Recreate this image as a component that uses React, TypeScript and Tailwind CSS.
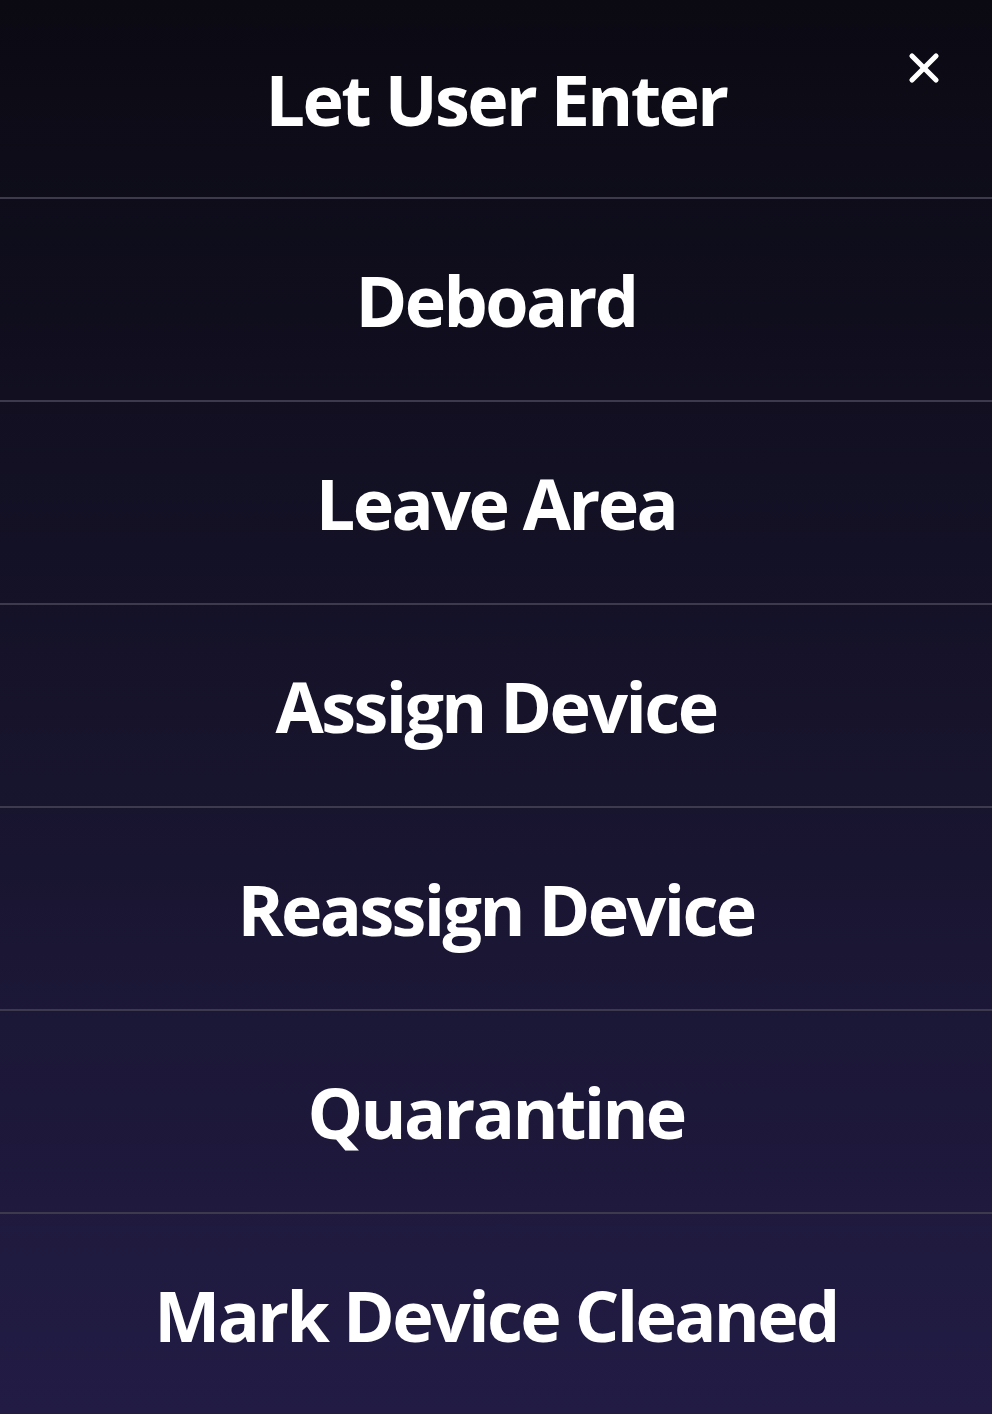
import { X } from "lucide-react"

const actions = [
  "Let User Enter",
  "Deboard",
  "Leave Area",
  "Assign Device",
  "Reassign Device",
  "Quarantine",
  "Mark Device Cleaned",
]

export default function App() {
  return (
    <div className="relative h-[1414px] w-full overflow-hidden bg-gradient-to-b from-[#0b0a13] to-[#221c45] font-['Open_Sans',sans-serif] text-white">
      <button className="absolute right-[44px] top-[44px] text-white">
        <X className="h-[48px] w-[48px]" strokeWidth={2.6} />
      </button>
      <ul className="flex flex-col">
        {actions.map((label, i) => (
          <li
            key={label}
            className={`flex items-center justify-center border-b-2 border-[#3c3a4c] ${i === 0 ? "h-[199px]" : "h-[203px]"}`}
          >
            <span className="text-[70px] font-bold leading-none tracking-[-2.6px]">{label}</span>
          </li>
        ))}
      </ul>
    </div>
  )
}
